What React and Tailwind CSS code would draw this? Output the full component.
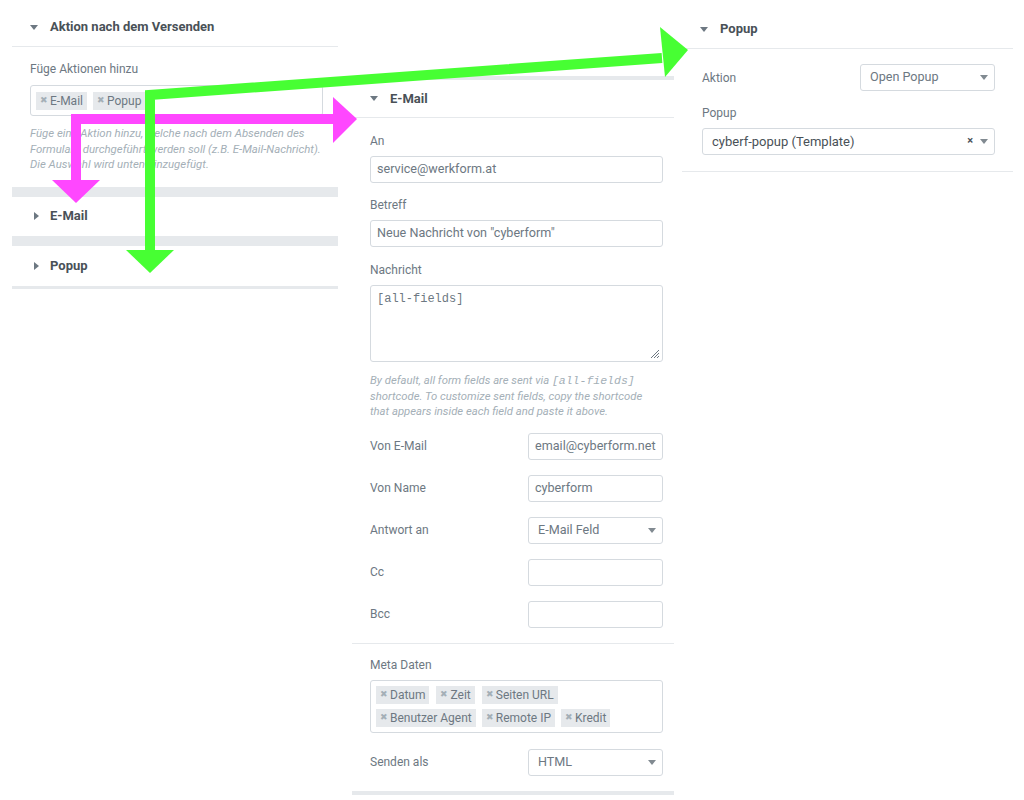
const font = { fontFamily: 'Roboto, "Liberation Sans", sans-serif' }
const mono = { fontFamily: '"Liberation Mono", "Courier New", monospace' }

function CaretDown({ className = '' }) {
  return (
    <svg width="8" height="5" viewBox="0 0 8 5" className={className}>
      <path d="M0 0 L8 0 L4 5 Z" fill="currentColor" />
    </svg>
  )
}

function CaretRight() {
  return (
    <svg width="5" height="8" viewBox="0 0 5 8" className="text-[#6d7882]">
      <path d="M0 0 L5 4 L0 8 Z" fill="currentColor" />
    </svg>
  )
}

function Tag({ children }) {
  return (
    <span className="inline-flex items-center h-[18px] bg-[#e6e9ec] px-[4px] text-[12px] text-[#6d7882] leading-none">
      <span className="text-[9px] mr-[2px] text-[#a4afb7]">✖</span>
      {children}
    </span>
  )
}

function Label({ children, className = '' }) {
  return <div className={`h-[14px] leading-[14px] text-[12px] text-[#6d7882] ${className}`}>{children}</div>
}

function SectionHeader({ title, className = '' }) {
  return (
    <div className={`flex items-center text-[13px] font-bold text-[#495157] ${className}`}>
      <CaretDown className="text-[#6d7882] mr-[12px]" />
      {title}
    </div>
  )
}

function TextInput({ value, className = '' }) {
  return (
    <div className={`h-[27px] border border-[#d5dadf] rounded-[3px] flex items-center px-[6px] text-[12.6px] text-[#6d7882] bg-white ${className}`}>
      {value}
    </div>
  )
}

function Select({ value, className = '', clear = false, dark = false }) {
  return (
    <div className={`h-[27px] border border-[#d5dadf] rounded-[3px] flex items-center pl-[9px] pr-[6px] bg-white ${dark ? 'text-[13px] text-[#495157]' : 'text-[12.6px] text-[#6d7882]'} ${className}`}>
      <span className="flex-1">{value}</span>
      {clear ? <span className="text-[11px] font-bold text-[#495157] mr-[7px]">×</span> : null}
      <CaretDown className="text-[#818a91]" />
    </div>
  )
}

function Row({ label, children }) {
  return (
    <div className="flex items-center justify-between h-[27px] mb-[15px]">
      <span className="text-[12px] text-[#6d7882]">{label}</span>
      {children}
    </div>
  )
}

function LeftPanel() {
  return (
    <div className="w-[326px] ml-[12px]">
      <SectionHeader title="Aktion nach dem Versenden" className="h-[47px] pl-[18px] pt-[8px] border-b border-[#e6e9ec]" />
      <div className="pl-[18px] pr-[15px] pt-[15px]">
        <Label className="mb-[9px]">Füge Aktionen hinzu</Label>
        <div className="h-[31px] border border-[#d5dadf] rounded-[3px] flex items-center gap-[6px] px-[5px]">
          <Tag>E-Mail</Tag>
          <Tag>Popup</Tag>
        </div>
        <p className="mt-[10px] mr-[-12px] text-[11.4px] italic leading-[15.5px] text-[#a4afb7]">
          Füge eine Aktion hinzu, welche nach dem Absenden des<br />
          Formulars durchgeführt werden soll (z.B. E-Mail-Nachricht).<br />
          Die Auswahl wird unten hinzugefügt.
        </p>
      </div>
      <div className="mt-[14px] h-[10px] bg-[#e6e9ec]" />
      <div className="h-[39px] flex items-center pl-[22px] gap-[11px] text-[13px] font-bold text-[#495157]">
        <CaretRight />
        E-Mail
      </div>
      <div className="h-[10px] bg-[#e6e9ec]" />
      <div className="h-[40px] flex items-center pl-[22px] gap-[11px] text-[13px] font-bold text-[#495157]">
        <CaretRight />
        Popup
      </div>
      <div className="h-[3px] bg-[#e6e9ec]" />
    </div>
  )
}

function MiddlePanel() {
  return (
    <div className="w-[322px] ml-[14px] mt-[76px]">
      <div className="h-[4px] bg-[#e6e9ec]" />
      <SectionHeader title="E-Mail" className="h-[38px] pl-[18px] border-b border-[#e6e9ec]" />
      <div className="pl-[18px] pr-[11px] pt-[16px]">
        <Label className="mb-[8px]">An</Label>
        <TextInput value="service@werkform.at" />
        <Label className="mt-[15px] mb-[8px]">Betreff</Label>
        <TextInput value="Neue Nachricht von &quot;cyberform&quot;" />
        <Label className="mt-[16px] mb-[8px]">Nachricht</Label>
        <div className="relative h-[77px] border border-[#d5dadf] rounded-[3px] px-[6px] pt-[4px] text-[12px] text-[#6d7882]" style={mono}>
          [all-fields]
          <svg width="10" height="10" viewBox="0 0 10 10" className="absolute right-[2px] bottom-[2px]">
            <path d="M9 1 L1 9 M9 4 L4 9 M9 7 L7 9" stroke="#6d7882" strokeWidth="1" />
          </svg>
        </div>
        <p className="mt-[11px] text-[11.3px] italic leading-[15.5px] text-[#a4afb7]">
          By default, all form fields are sent via <span className="text-[11.5px]" style={mono}>[all-fields]</span><br />
          shortcode. To customize sent fields, copy the shortcode<br />
          that appears inside each field and paste it above.
        </p>
        <div className="mt-[13px]">
          <Row label="Von E-Mail"><TextInput value="email@cyberform.net" className="w-[135px]" /></Row>
          <Row label="Von Name"><TextInput value="cyberform" className="w-[135px]" /></Row>
          <Row label="Antwort an"><Select value="E-Mail Feld" className="w-[135px]" /></Row>
          <Row label="Cc"><TextInput value="" className="w-[135px]" /></Row>
          <Row label="Bcc"><TextInput value="" className="w-[135px]" /></Row>
        </div>
      </div>
      <div className="border-t border-[#e6e9ec] pl-[18px] pr-[11px] pt-[14px]">
        <Label className="mb-[8px]">Meta Daten</Label>
        <div className="border border-[#d5dadf] rounded-[3px] px-[5px] pt-[5px] pb-[5px] flex flex-col gap-[5px]">
          <div className="flex gap-[7px]">
            <Tag>Datum</Tag>
            <Tag>Zeit</Tag>
            <Tag>Seiten URL</Tag>
          </div>
          <div className="flex gap-[6px]">
            <Tag>Benutzer Agent</Tag>
            <Tag>Remote IP</Tag>
            <Tag>Kredit</Tag>
          </div>
        </div>
        <div className="flex items-center justify-between h-[27px] mt-[16px]">
          <span className="text-[12px] text-[#6d7882]">Senden als</span>
          <Select value="HTML" className="w-[135px]" />
        </div>
      </div>
      <div className="mt-[15px] h-[4px] bg-[#e6e9ec]" />
    </div>
  )
}

function RightPanel() {
  return (
    <div className="w-[331px] ml-[8px]">
      <SectionHeader title="Popup" className="h-[49px] pl-[18px] pt-[10px] border-b border-[#e6e9ec]" />
      <div className="pl-[20px] pr-[18px] pt-[15px] pb-[16px] border-b border-[#e6e9ec]">
        <div className="flex items-center justify-between h-[27px]">
          <span className="text-[12px] text-[#6d7882]">Aktion</span>
          <Select value="Open Popup" className="w-[135px]" />
        </div>
        <Label className="mt-[15px] mb-[8px]">Popup</Label>
        <Select value="cyberf-popup (Template)" clear dark />
      </div>
    </div>
  )
}

function Arrows() {
  return (
    <svg width="1024" height="800" className="absolute left-0 top-0 pointer-events-none">
      <polyline points="76,182 76,119 335,119" fill="none" stroke="#ff47ff" strokeWidth="10" strokeLinejoin="miter" />
      <polygon points="52,180 100,180 76,203" fill="#ff47ff" />
      <polygon points="333,97 333,143 357,119" fill="#ff47ff" />
      <polyline points="150,252 150,95 662,58" fill="none" stroke="#47ff33" strokeWidth="10" strokeLinejoin="miter" />
      <polygon points="126,250 174,250 150,273" fill="#47ff33" />
      <polygon points="660,27 665,77 688,50" fill="#47ff33" />
    </svg>
  )
}

export default function App() {
  return (
    <div className="relative w-[1024px] h-[800px] bg-white overflow-hidden" style={font}>
      <div className="flex items-start">
        <LeftPanel />
        <MiddlePanel />
        <RightPanel />
      </div>
      <Arrows />
    </div>
  )
}
